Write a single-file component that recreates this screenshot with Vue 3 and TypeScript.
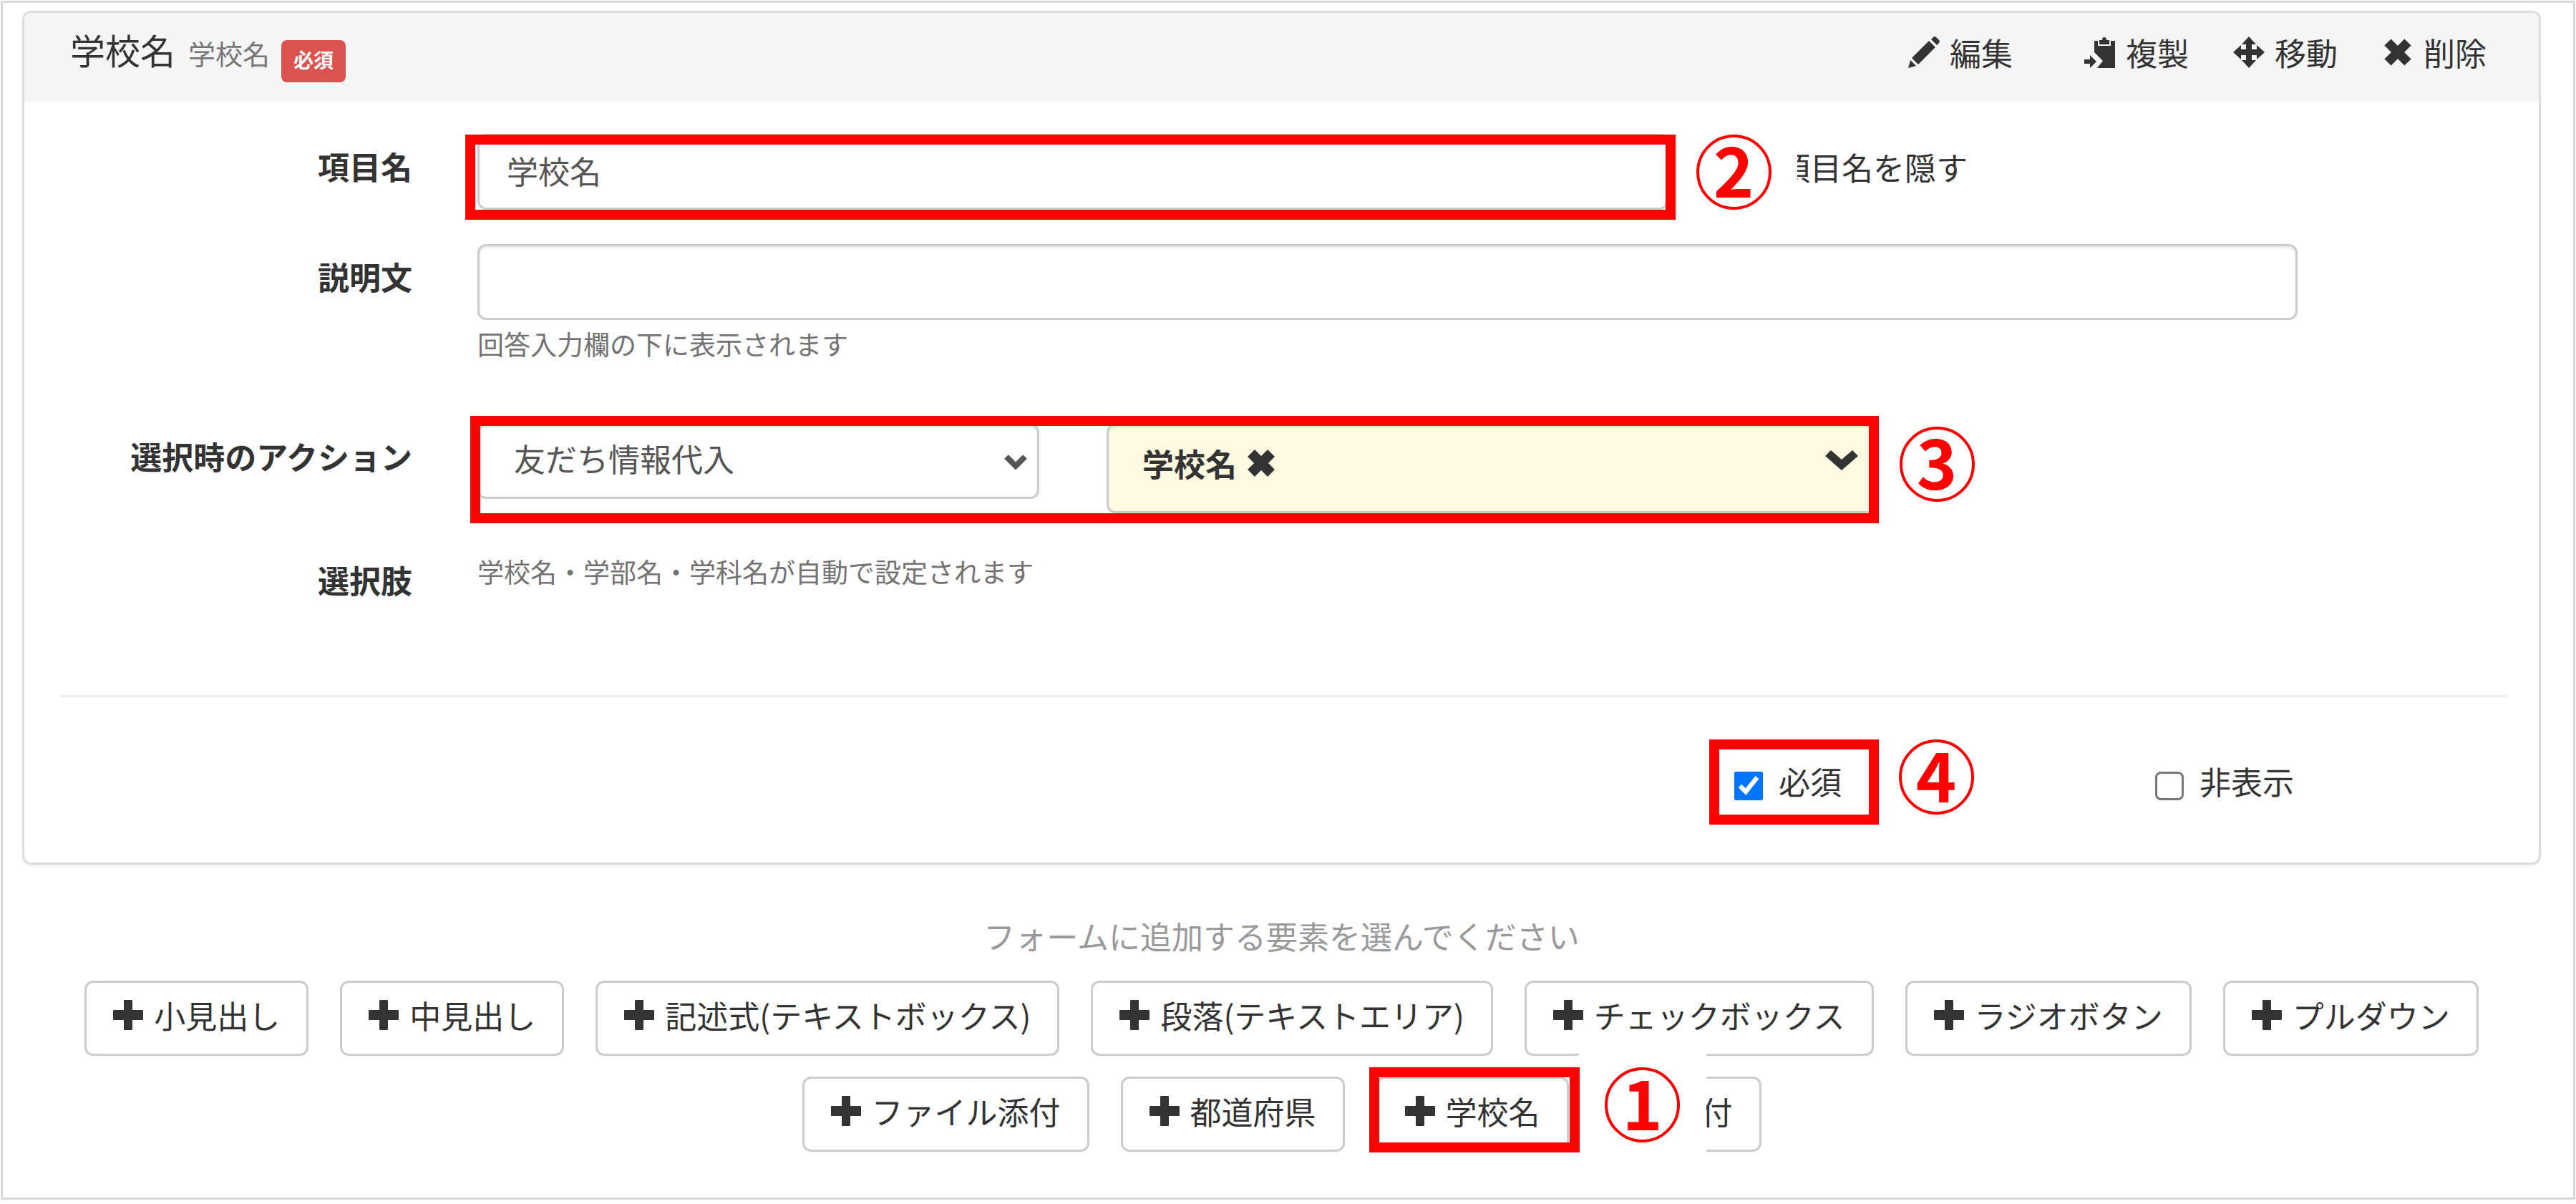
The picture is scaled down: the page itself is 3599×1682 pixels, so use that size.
<script setup lang="ts">
import { ref } from 'vue'

interface ElementKind {
  label: string
  step?: number
}

const itemName = ref('学校名')
const description = ref('')
const action = ref('友だち情報代入')
const required = ref(true)
const hidden = ref(false)

const elementKinds: ElementKind[] = [
  { label: '小見出し' },
  { label: '中見出し' },
  { label: '記述式(テキストボックス)' },
  { label: '段落(テキストエリア)' },
  { label: 'チェックボックス' },
  { label: 'ラジオボタン' },
  { label: 'プルダウン' },
  { label: 'ファイル添付' },
  { label: '都道府県' },
  { label: '学校名', step: 1 },
  { label: '日付' },
]
</script>

<template>
  <main class="page">
    <section class="panel">
      <header class="panel-head">
        <h1 class="title">学校名</h1>
        <span class="subtitle">学校名</span>
        <span class="badge">必須</span>
        <nav class="actions">
          <button type="button" class="action action-edit">
            <svg class="icon" viewBox="0 0 44 44" aria-hidden="true">
              <path d="M5 30 29 6l9 9L14 39ZM32 4l3-3q2-2 4 0l4 4q2 2 0 4l-3 3ZM3 33l8 8L0 44Z" />
            </svg>
            <span>編集</span>
          </button>
          <button type="button" class="action">
            <svg class="icon" viewBox="0 0 44 44" aria-hidden="true">
              <path d="M14 6h5v7h18V6h6v38H18l8-10L14 22Z" />
              <path d="M21 11V5h4q0-4 3-4t3 4h4v6Z" />
              <path d="M0 32h8v-6l9 9-9 9v-6H0Z" />
            </svg>
            <span>複製</span>
          </button>
          <button type="button" class="action">
            <svg class="icon" viewBox="0 0 44 44" aria-hidden="true">
              <path d="M22 0l10 11h-6v7h7v-6l11 10-11 10v-6h-7v7h6L22 44 12 33h6v-7h-7v6L0 22l11-10v6h7v-7h-6Z" />
            </svg>
            <span>移動</span>
          </button>
          <button type="button" class="action">
            <svg class="icon" viewBox="0 0 44 44" aria-hidden="true">
              <path d="M8 8l28 28M36 8L8 36" stroke="currentColor" stroke-width="13" />
            </svg>
            <span>削除</span>
          </button>
        </nav>
      </header>

      <div class="panel-body">
        <div class="row">
          <label class="row-label" for="item-name">項目名</label>
          <div class="row-field">
            <div class="span-8 marked">
              <input id="item-name" v-model="itemName" class="control" type="text" />
              <span class="step step-name"><span class="step-circle">2</span></span>
              <span class="frame frame-name"></span>
            </div>
            <div class="span-4 hide-name">
              <button type="button" class="plain">項目名を隠す</button>
            </div>
          </div>
        </div>

        <div class="row row-description">
          <label class="row-label" for="description">説明文</label>
          <div class="row-field">
            <div class="span-12">
              <input id="description" v-model="description" class="control" type="text" />
              <p class="help">回答入力欄の下に表示されます</p>
            </div>
          </div>
        </div>

        <div class="row">
          <label class="row-label" for="action">選択時のアクション</label>
          <div class="row-field marked">
            <div class="span-4 select-wrap">
              <select id="action" v-model="action" class="control select">
                <option>友だち情報代入</option>
              </select>
              <svg class="select-arrow" viewBox="0 0 34 22" aria-hidden="true">
                <path d="M4 4l13 13L30 4" />
              </svg>
            </div>
            <div class="span-6 target">
              <span>学校名</span>
              <button type="button" class="clear" aria-label="クリア">
                <svg class="icon" viewBox="0 0 44 44" aria-hidden="true">
                  <path d="M8 8l28 28M36 8L8 36" stroke="currentColor" stroke-width="14" />
                </svg>
              </button>
              <svg class="target-arrow" viewBox="0 0 46 28" aria-hidden="true">
                <path d="M0 8l8-8 15 13L38 0l8 8-23 20Z" />
              </svg>
            </div>
            <span class="step step-action"><span class="step-circle">3</span></span>
            <span class="frame frame-action"></span>
          </div>
        </div>

        <div class="row">
          <span class="row-label">選択肢</span>
          <p class="help">学校名・学部名・学科名が自動で設定されます</p>
        </div>
      </div>

      <hr class="divider" />

      <div class="panel-foot">
        <label class="check marked">
          <input v-model="required" type="checkbox" />
          <span>必須</span>
          <span class="frame frame-required"></span>
          <span class="step step-required"><span class="step-circle">4</span></span>
        </label>
        <label class="check">
          <input v-model="hidden" type="checkbox" />
          <span>非表示</span>
        </label>
      </div>
    </section>

    <p class="prompt">フォームに追加する要素を選んでください</p>
    <ul class="kinds">
      <li v-for="kind in elementKinds" :key="kind.label" :class="{ marked: kind.step }">
        <button type="button" class="kind">
          <svg class="plus" viewBox="0 0 42 42" aria-hidden="true">
            <path d="M15 1q0-1 1-1h10q1 0 1 1v13h14q1 0 1 1v12q0 1-1 1H27v13q0 1-1 1H16q-1 0-1-1V28H1q-1 0-1-1V15q0-1 1-1h14Z" />
          </svg>
          <span>{{ kind.label }}</span>
        </button>
        <template v-if="kind.step">
          <span class="step step-kind"><span class="step-circle">{{ kind.step }}</span></span>
          <span class="frame frame-kind"></span>
        </template>
      </li>
    </ul>
  </main>
</template>

<style>
body {
  margin: 0;
  background: #fff;
}
</style>

<style scoped>
* {
  box-sizing: border-box;
}

.page {
  margin: 1px;
  padding: 11px 45px 64px 27px;
  border: 3px solid #d9d9d9;
  background: #fff;
  color: #333;
  font-family: "Noto Sans CJK JP", sans-serif;
  font-size: 44px;
  line-height: 60px;
}

button,
input,
select {
  color: inherit;
  font: inherit;
}

button {
  padding: 0;
  border: 0;
  background: none;
  cursor: pointer;
}

p {
  margin: 0;
}

.icon {
  width: 44px;
  height: 44px;
  fill: currentColor;
}

/* panel */
.panel {
  border: 3px solid #ddd;
  border-radius: 12px;
  background: #fff;
  box-shadow: 0 3px 3px rgba(0, 0, 0, 0.05);
}

.panel-head {
  display: flex;
  align-items: baseline;
  height: 124px;
  padding: 21px 73px 0 64px;
  border-radius: 9px 9px 0 0;
  background: #f5f5f5;
}

.title {
  margin: 0;
  font-size: 49px;
  font-weight: 400;
}

.subtitle {
  margin-left: 18px;
  color: #777;
  font-size: 38px;
}

.badge {
  align-self: flex-start;
  height: 59px;
  margin: 17px 0 0 16px;
  padding: 0 17px;
  border-radius: 8px;
  background: #d9534f;
  color: #fff;
  font-size: 28px;
  font-weight: 700;
  line-height: 54px;
}

.actions {
  display: flex;
  align-self: flex-start;
  gap: 62px;
  margin: 4px 0 0 auto;
}

.action {
  display: flex;
  align-items: center;
  gap: 14px;
}

.action-edit {
  margin-right: 38px;
}

/* form rows */
.panel-body {
  display: flex;
  flex-direction: column;
  gap: 48px;
  padding: 45px 337px 0 0;
}

.row {
  display: grid;
  grid-template-columns: 542px minmax(0, 1fr);
  column-gap: 91px;
  align-items: start;
}

.row-description {
  margin-bottom: 36px;
}

.row-label {
  padding: 15px 0 2px;
  font-weight: 700;
  text-align: right;
}

.row-field {
  display: grid;
  grid-template-columns: repeat(12, minmax(0, 1fr));
  column-gap: 94px;
  align-items: start;
}

.span-4 {
  grid-column: span 4;
}

.span-6 {
  grid-column: span 6;
}

.span-8 {
  grid-column: span 8;
}

.span-12 {
  grid-column: span 12;
}

.control {
  display: block;
  width: 100%;
  height: 106px;
  padding: 0 38px 4px;
  border: 3px solid #ccc;
  border-radius: 12px;
  background: #fff;
  box-shadow: inset 0 3px 3px rgba(0, 0, 0, 0.075);
  color: #555;
}

.help {
  padding-top: 6px;
  color: #737373;
  font-size: 37px;
  line-height: 54px;
}

.span-12 .help {
  padding-bottom: 1px;
}

.hide-name {
  padding: 16px 0 0 60px;
}

.select-wrap {
  position: relative;
}

.select {
  height: 105px;
  padding: 0 48px 10px;
  appearance: none;
}

.select-arrow {
  position: absolute;
  top: 42px;
  right: 16px;
  width: 34px;
  height: 22px;
  fill: none;
  stroke: #555;
  stroke-width: 8px;
  pointer-events: none;
}

.target {
  display: flex;
  align-items: center;
  height: 125px;
  padding: 0 172px 15px 47px;
  border: 3px solid #ccc;
  border-radius: 12px;
  background: #fffae1;
  box-shadow: inset 0 3px 3px rgba(0, 0, 0, 0.075);
  font-weight: 700;
}

.clear {
  display: flex;
  margin-left: 12px;
}

.target-arrow {
  width: 46px;
  height: 28px;
  margin: 0 0 8px auto;
  fill: currentColor;
}

.divider {
  height: 3px;
  margin: 129px 45px 0 49px;
  border: 0;
  background: #eee;
}

.panel-foot {
  display: flex;
  justify-content: flex-end;
  gap: 438px;
  padding: 87px 342px 84px 0;
}

.check {
  display: flex;
  gap: 22px;
}

.check input {
  width: 40px;
  height: 40px;
  margin: 17px 0 0;
  border: 3px solid #767676;
  border-radius: 8px;
  background: #fff;
  appearance: none;
}

.check input:checked {
  appearance: auto;
}

/* element buttons */
.prompt {
  margin-top: 69px;
  color: #999;
  text-align: center;
}

.kinds {
  display: flex;
  flex-wrap: wrap;
  justify-content: center;
  gap: 29px 44px;
  margin: 33px 0 0;
  padding: 0;
  list-style: none;
}

.kind {
  display: flex;
  align-items: center;
  gap: 15px;
  height: 105px;
  padding: 0 37px 10px;
  border: 3px solid #ccc;
  border-radius: 12px;
  background: #fff;
}

.plus {
  width: 42px;
  height: 42px;
  fill: currentColor;
}

/* step markers laid over the form */
.marked {
  position: relative;
}

.check.marked {
  z-index: 0;
}

.step {
  position: absolute;
  z-index: 1;
  display: flex;
  align-items: center;
  justify-content: center;
  width: 178px;
  height: 154px;
  background: #fff;
  color: #f00;
  pointer-events: none;
}

.step-circle {
  display: flex;
  align-items: center;
  justify-content: center;
  width: 105px;
  height: 105px;
  padding-bottom: 11px;
  border: 4px solid #f00;
  border-radius: 50%;
  font-size: 96px;
  font-weight: 700;
  line-height: 86px;
}

.frame {
  position: absolute;
  z-index: 2;
  border: 14px solid #f00;
  pointer-events: none;
}

.frame-name {
  inset: 1px -10px -14px -17px;
}

.frame-action {
  inset: -11px 585px -14px -10px;
}

.frame-required {
  top: -28px;
  left: -35px;
  width: 237px;
  height: 119px;
}

.frame-kind {
  inset: -13px -15px -1px -10px;
}

.step-name {
  top: -24px;
  right: -180px;
}

.step-action {
  top: -21px;
  right: 415px;
}

.step-required {
  top: -53px;
  left: 193px;
}

.step-kind {
  top: -38px;
  left: 283px;
}
</style>
